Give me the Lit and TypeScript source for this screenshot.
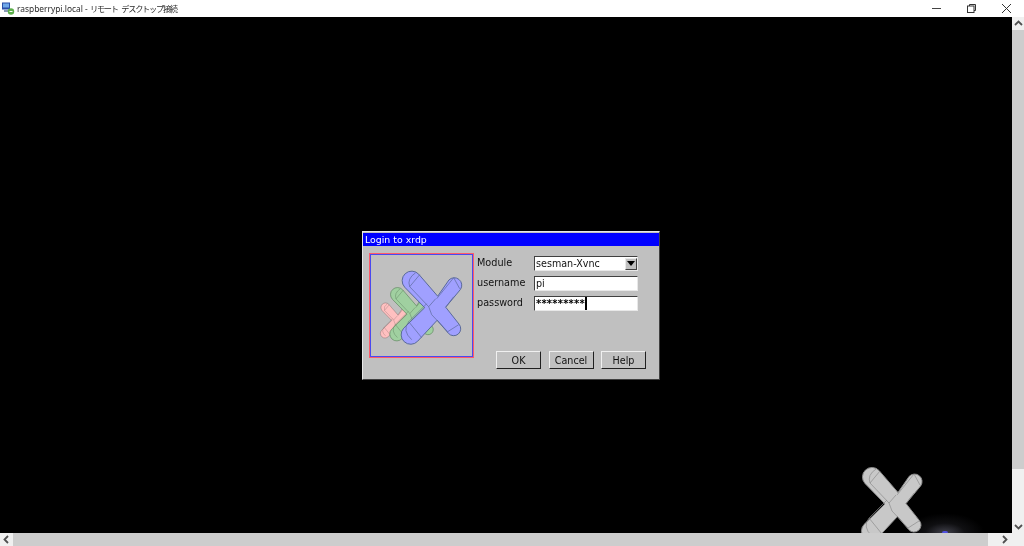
import { LitElement, html, css, svg } from "lit";
import { customElement } from "lit/decorators.js";

const outline =
  "M-31,-19.5 A9.5,9.5 0 0 1 -17,-32.5 L2,-10.5 L13.2,-26.7 A7.5,7.5 0 0 1 24.8,-17.3 L10,0.5 L23.3,17.4 A7,7 0 0 1 12.7,26.6 L1.5,13.5 L-18,34.5 A9.5,9.5 0 0 1 -32,21.5 L-11,1 Z";
const seams =
  "M-16,-32 L-26,-20 L-7,0 L0,-8 M-20,-34 Q-29,-28 -26,-20 M18,-29 L24,-18 M18,-29 L1,-8 M23,18 L12,25 M10,0.5 L18,-10 M-7,0 L-4,8 L12,25 M-27,15 L-9,-3 M-27,15 L-14,31 M-27,15 Q-34,24 -24,33";

function xLogo(fill: string, stroke: string) {
  return svg`<path d=${outline} fill=${fill} stroke=${stroke} stroke-width="1"></path>
    <path d=${seams} fill="none" stroke=${stroke} stroke-width="0.8" stroke-opacity="0.85"></path>`;
}

@customElement("app-root")
export class AppRoot extends LitElement {
  static styles = css`
    :host {
      display: flex;
      flex-direction: column;
      width: 1024px;
      height: 546px;
      overflow: hidden;
      background: #f0f0f0;
      font-family: "DejaVu Sans", sans-serif;
    }
    .titlebar {
      height: 17px;
      flex: none;
      display: flex;
      align-items: center;
      background: #fff;
      padding-left: 2px;
    }
    .app-icon { width: 13px; height: 13px; flex: none; }
    .title {
      margin-left: 2px;
      font: 8.4px "Noto Sans", "Noto Sans CJK JP", sans-serif;
      color: #2a2a2a;
      white-space: nowrap;
      flex: 1;
      line-height: 15px;
      filter: blur(0.25px);
    }
    .title .ja {
      font: 8.2px "Noto Sans CJK JP", sans-serif;
      letter-spacing: -1.25px;
      word-spacing: 3px;
    }
    .win-btns { display: flex; height: 17px; }
    .win-btn { width: 35px; height: 16px; display: flex; align-items: center; justify-content: center; }
    .win-btn svg { width: 11px; height: 11px; }
    .middle { flex: 1; display: flex; min-height: 0; }
    .desktop {
      position: relative;
      flex: 1;
      background: #000;
      overflow: hidden;
    }
    .vbar {
      width: 12px;
      flex: none;
      background: #f0f0f0;
      display: flex;
      flex-direction: column;
    }
    .vbar .arrow { height: 13px; }
    .vthumb { height: 439px; background: #cdcdcd; }
    .vspace { flex: 1; }
    .hbar { height: 13px; flex: none; display: flex; background: #f0f0f0; }
    .hbar .arrow { width: 13px; }
    .hthumb { width: 975px; background: #cdcdcd; }
    .arrow { display: flex; align-items: center; justify-content: center; flex: none; }
    .arrow svg { width: 9px; height: 9px; }
    .hspace { flex: 1; display: flex; justify-content: flex-end; padding-right: 13px; }
    .bg-x { position: absolute; left: 850px; top: 440px; width: 90px; height: 76px; filter: blur(0.35px); }
    .glow {
      position: absolute;
      left: 905px;
      top: 496px;
      width: 80px;
      height: 40px;
      background: radial-gradient(ellipse at center, rgba(130,130,150,0.5) 0%, rgba(70,70,80,0.22) 35%, rgba(0,0,0,0) 70%);
    }
    .glow-dot {
      position: absolute;
      left: 942px;
      top: 514px;
      width: 6px;
      height: 2px;
      background: #5050e0;
      border-radius: 3px 3px 0 0;
    }
    .dialog {
      position: absolute;
      left: 362px;
      top: 214px;
      width: 298px;
      height: 149px;
      box-sizing: border-box;
      background: #c0c0c0;
      border: 1px solid;
      border-color: #e8e8e8 #404040 #404040 #e8e8e8;
      padding: 1px 0 0;
      display: flex;
      flex-direction: column;
      filter: blur(0.35px);
    }
    .dlg-title {
      height: 13px;
      background: #0000ff;
      color: #fff;
      font-size: 9.4px;
      line-height: 13px;
      padding-left: 2px;
      flex: none;
    }
    .dlg-body {
      flex: 1;
      display: flex;
      padding: 7px 13px 10px 6px;
      gap: 3px;
    }
    .logo-frame {
      width: 105px;
      height: 105px;
      box-sizing: border-box;
      border: 1px solid #ff5a68;
      box-shadow: inset 0 0 0 1px #4a4af0;
      flex: none;
    }
    .logo-frame svg { display: block; width: 103px; height: 103px; }
    .form { flex: 1; display: flex; flex-direction: column; }
    .rows { display: flex; flex-direction: column; gap: 5px; padding-top: 3px; padding-right: 8px; }
    .row { display: flex; height: 15px; align-items: center; }
    .lab {
      width: 57px;
      font-size: 9.7px;
      color: #111;
      flex: none;
      position: relative;
      top: -1.5px;
    }
    .input {
      flex: 1;
      height: 15px;
      box-sizing: border-box;
      background: #fff;
      border: 1px solid;
      border-color: #404040 #e8e8e8 #e8e8e8 #404040;
      font-size: 9.6px;
      line-height: 13px;
      padding-left: 1px;
      color: #111;
      display: flex;
      align-items: center;
      overflow: hidden;
      white-space: nowrap;
    }
    .input .val { flex: 1; }
    .stars { font-size: 10px; letter-spacing: 0.2px; line-height: 13px; color: #000; font-weight: 700; }
    .caret { display: inline-block; width: 2px; height: 13px; background: #000; flex: none; }
    .dd {
      width: 12px;
      height: 12px;
      background: #c0c0c0;
      border: 1px solid;
      border-color: #e8e8e8 #404040 #404040 #e8e8e8;
      box-sizing: border-box;
      display: flex;
      align-items: center;
      justify-content: center;
      flex: none;
    }
    .tri { width: 0; height: 0; border-left: 4px solid transparent; border-right: 4px solid transparent; border-top: 5px solid #000; }
    .buttons { margin-top: auto; display: flex; justify-content: flex-end; gap: 7.5px; }
    .btn {
      width: 45px;
      height: 18px;
      box-sizing: border-box;
      background: #c0c0c0;
      border: 1px solid;
      border-color: #f0f0f0 #202020 #202020 #f0f0f0;
      font-size: 9.6px;
      color: #111;
      display: flex;
      align-items: center;
      justify-content: center;
    }
  `;

  render() {
    return html`
      <div class="titlebar">
        <svg class="app-icon" viewBox="0 0 13 13">
          <rect x="0" y="0.5" width="8" height="7" fill="#2b4fa8"></rect>
          <rect x="1" y="1.5" width="6" height="4" fill="#6fa8e8"></rect>
          <rect x="2" y="8" width="5" height="2" fill="#8a9bb5"></rect>
          <circle cx="9" cy="9.5" r="3.2" fill="#5cae4a"></circle>
          <path d="M7.5 9.5 L10.5 9.5" stroke="#fff" stroke-width="1"></path>
        </svg>
        <div class="title">raspberrypi.local - <span class="ja">リモート デスクトップ接続</span></div>
        <div class="win-btns">
          <div class="win-btn">
            <svg viewBox="0 0 11 11"><path d="M1 5.5 H10" stroke="#444" stroke-width="1"></path></svg>
          </div>
          <div class="win-btn">
            <svg viewBox="0 0 11 11" fill="none" stroke="#333" stroke-width="1">
              <rect x="1.5" y="3" width="6.5" height="6.5"></rect>
              <path d="M3.5 3 V1.5 H9.5 V7.5 H8"></path>
            </svg>
          </div>
          <div class="win-btn">
            <svg viewBox="0 0 11 11"><path d="M1 1 L10 10 M10 1 L1 10" stroke="#333" stroke-width="1"></path></svg>
          </div>
        </div>
      </div>
      <div class="middle">
        <div class="desktop">
          <div class="glow"></div>
          <div class="glow-dot"></div>
          <svg class="bg-x" viewBox="0 0 90 76">
            <g transform="translate(46,46)">${xLogo("#c8c8c8", "#8a8a8a")}</g>
          </svg>
          <div class="dialog">
            <div class="dlg-title">Login to xrdp</div>
            <div class="dlg-body">
              <div class="logo-frame">
                <svg viewBox="0 0 103 103">
                  <g transform="translate(27,66) scale(0.48)">${xLogo("#ffc0c0", "#8a7070")}</g>
                  <g transform="translate(45,59.5) scale(0.73)">${xLogo("#a0d0a0", "#668a66")}</g>
                  <g transform="translate(65.7,52.7)">${xLogo("#a0a0ff", "#5a6a9a")}</g>
                </svg>
              </div>
              <div class="form">
                <div class="rows">
                  <div class="row">
                    <div class="lab">Module</div>
                    <div class="input"><span class="val">sesman-Xvnc</span><span class="dd"><span class="tri"></span></span></div>
                  </div>
                  <div class="row">
                    <div class="lab">username</div>
                    <div class="input">pi</div>
                  </div>
                  <div class="row">
                    <div class="lab">password</div>
                    <div class="input"><span class="stars">*********</span><span class="caret"></span></div>
                  </div>
                </div>
                <div class="buttons">
                  <div class="btn">OK</div>
                  <div class="btn">Cancel</div>
                  <div class="btn">Help</div>
                </div>
              </div>
            </div>
          </div>
        </div>
        <div class="vbar">
          <div class="arrow"><svg viewBox="0 0 9 9"><path d="M1 6 L4.5 2.5 L8 6" fill="none" stroke="#505050" stroke-width="1.8"></path></svg></div>
          <div class="vthumb"></div>
          <div class="vspace"></div>
          <div class="arrow"><svg viewBox="0 0 9 9"><path d="M1 3 L4.5 6.5 L8 3" fill="none" stroke="#505050" stroke-width="1.8"></path></svg></div>
        </div>
      </div>
      <div class="hbar">
        <div class="arrow"><svg viewBox="0 0 9 9"><path d="M6 1 L2.5 4.5 L6 8" fill="none" stroke="#505050" stroke-width="1.8"></path></svg></div>
        <div class="hthumb"></div>
        <div class="hspace">
          <div class="arrow"><svg viewBox="0 0 9 9"><path d="M3 1 L6.5 4.5 L3 8" fill="none" stroke="#505050" stroke-width="1.8"></path></svg></div>
        </div>
      </div>
    `;
  }
}
